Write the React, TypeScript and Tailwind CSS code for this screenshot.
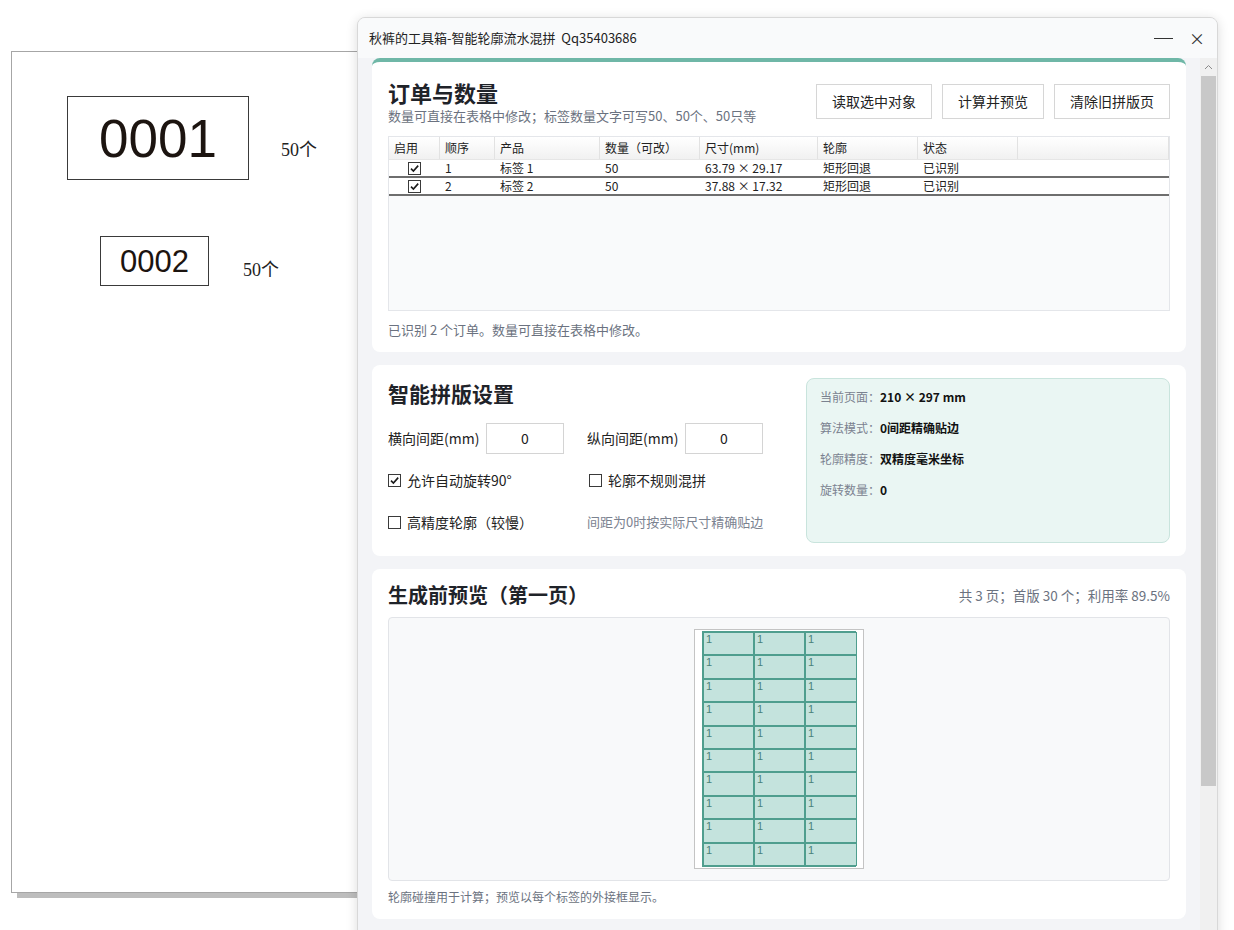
import React from 'react';

const FONT = "font-['Noto_Sans_CJK_SC','Noto_Sans',sans-serif]";

function Check({ checked }: { checked?: boolean }) {
  return (
    <span className="inline-flex items-center justify-center w-[13px] h-[13px] border border-[#3a3a3a] bg-white shrink-0">
      {checked && (
        <svg width="11" height="11" viewBox="0 0 11 11">
          <path d="M2 5.6 L4.4 8 L9.2 2.6" fill="none" stroke="#1a1a1a" strokeWidth="1.6" />
        </svg>
      )}
    </span>
  );
}

const headers = ['启用', '顺序', '产品', '数量（可改）', '尺寸(mm)', '轮廓', '状态', ''];
const rows = [
  ['1', '标签 1', '50', '63.79 × 29.17', '矩形回退', '已识别'],
  ['2', '标签 2', '50', '37.88 × 17.32', '矩形回退', '已识别'],
];
const COLS = 'grid grid-cols-[51px_55px_105px_100px_118px_100px_100px_1fr]';

function Table() {
  return (
    <div className="h-[175px] border border-[#e4e6ea] bg-[#f9fafb] flex flex-col">
      <div className={`${COLS} h-[23px] bg-gradient-to-b from-white to-[#f1f1f1] border-b border-[#e6e6e6]`}>
        {headers.map((h, i) => (
          <div key={i} className="flex items-center px-[5px] text-[12px] text-[#222] border-r border-[#e2e2e2]">
            {h}
          </div>
        ))}
      </div>
      {rows.map((r, i) => (
        <div key={i} className={`${COLS} h-[18px] bg-white border-b-2 border-[#6e6e6e]`}>
          <div className="flex items-center justify-center">
            <Check checked />
          </div>
          {r.map((c, j) => (
            <div key={j} className="flex items-center px-[5px] text-[12px] leading-none text-[#222]">
              {c}
            </div>
          ))}
          <div />
        </div>
      ))}
    </div>
  );
}

function Btn({ children }: { children: React.ReactNode }) {
  return (
    <div className="h-[35px] px-[15px] flex items-center border border-[#d6d6d6] bg-white text-[14px] text-[#222]">
      {children}
    </div>
  );
}

function InfoRow({ label, value }: { label: string; value: string }) {
  return (
    <div className="h-[31px] flex items-center text-[12px]">
      <span className="text-[#7b8290]">{label}</span>
      <span className="font-bold text-[#111]">{value}</span>
    </div>
  );
}

function Preview() {
  const cells = Array.from({ length: 30 });
  return (
    <div className="h-[264px] border border-[#e2e4e8] rounded-[4px] bg-[#f8f9fa] flex justify-center pt-[11px]">
      <div className="w-[170px] h-[240px] bg-white border border-[#c4c4c4] pl-[7px] pt-[1px]">
        <div className="grid grid-cols-[51px_51px_52px] w-[154px] border border-[#4f9e8e]">
          {cells.map((_, i) => (
            <div
              key={i}
              className="h-[23.4px] bg-[#c4e3dd] border border-[#4f9e8e] text-[11px] leading-[12px] text-[#4a827a] pl-[2px] font-['Liberation_Sans',sans-serif]"
            >
              1
            </div>
          ))}
        </div>
      </div>
    </div>
  );
}

export default function App() {
  return (
    <div className={`relative w-[1234px] h-[930px] bg-white overflow-hidden ${FONT}`}>
      {/* document page behind the window */}
      <div className="absolute left-[11px] top-[51px] w-[640px] h-[842px] bg-white border border-[#a6a6a6] shadow-[6px_5px_0_#bdbdbd]">
        <div className="absolute left-[55px] top-[44px] w-[182px] h-[84px] border border-[#3a3a3a] flex items-center justify-center">
          <span className="font-['Liberation_Sans',sans-serif] text-[53px] leading-none text-[#1c1410]">0001</span>
        </div>
        <div className="absolute left-[269px] top-[85px] font-['Liberation_Serif','Noto_Sans_CJK_SC',serif] text-[18px] text-[#222]">50个</div>
        <div className="absolute left-[88px] top-[184px] w-[109px] h-[50px] border border-[#3a3a3a] flex items-center justify-center">
          <span className="font-['Liberation_Sans',sans-serif] text-[31px] leading-none text-[#1c1410]">0002</span>
        </div>
        <div className="absolute left-[231px] top-[205px] font-['Liberation_Serif','Noto_Sans_CJK_SC',serif] text-[18px] text-[#222]">50个</div>
      </div>

      {/* application window */}
      <div className="absolute left-[357px] top-[17px] w-[861px] h-[930px] rounded-t-[8px] border border-[#d8d8d8] bg-[#f3f4f7] shadow-[0_2px_12px_rgba(0,0,0,0.14)] flex flex-col overflow-hidden">
        <div className="h-[40px] shrink-0 bg-[#f9fafb] flex items-center pl-[11px] pr-[12px] text-[13px] text-[#222]">
          <span>秋裤的工具箱-智能轮廓流水混拼&nbsp;&nbsp;Qq35403686</span>
          <span className="ml-auto mr-[16px] w-[19px] h-[1px] bg-[#333]" />
          <span className="text-[16px] leading-none text-[#333]">×</span>
        </div>
        <div className="flex flex-1 min-h-0">
          <div className="flex-1 min-w-0 px-[14px] flex flex-col gap-[13px]">
            {/* card 1 */}
            <div className="bg-white rounded-[8px] border-t-4 border-[#6fb7a7] px-[16px] pt-[16px] pb-[12px]">
              <div className="flex items-start">
                <div>
                  <div className="text-[22px] leading-[28px] font-bold text-[#1f2329]">订单与数量</div>
                  <div className="text-[13px] leading-[20px] text-[#6b7280]">数量可直接在表格中修改；标签数量文字可写50、50个、50只等</div>
                </div>
                <div className="ml-auto mt-[6px] flex gap-[10px]">
                  <Btn>读取选中对象</Btn>
                  <Btn>计算并预览</Btn>
                  <Btn>清除旧拼版页</Btn>
                </div>
              </div>
              <div className="mt-[10px]">
                <Table />
              </div>
              <div className="mt-[9px] text-[13px] leading-[20px] text-[#6b7280]">已识别 2 个订单。数量可直接在表格中修改。</div>
            </div>

            {/* card 2 */}
            <div className="bg-white rounded-[8px] px-[16px] py-[13px] flex">
              <div className="flex-1 pt-[1px]">
                <div className="text-[21px] leading-[28px] font-bold text-[#1f2329]">智能拼版设置</div>
                <div className="mt-[16px] flex items-center text-[14px] text-[#222]">
                  <span className="w-[98px]">横向间距(mm)</span>
                  <div className="w-[78px] h-[31px] border border-[#d4d4d4] flex items-center justify-center">0</div>
                  <span className="ml-[23px] w-[98px]">纵向间距(mm)</span>
                  <div className="w-[78px] h-[31px] border border-[#d4d4d4] flex items-center justify-center">0</div>
                </div>
                <div className="mt-[11px] grid grid-cols-[199px_1fr] text-[14px] text-[#222]">
                  <div className="h-[30px] flex items-center gap-[6px]"><Check checked />允许自动旋转90°</div>
                  <div className="h-[30px] flex items-center gap-[6px] pl-[2px]"><Check />轮廓不规则混拼</div>
                  <div className="mt-[12px] h-[30px] flex items-center gap-[6px]"><Check />高精度轮廓（较慢）</div>
                  <div className="mt-[12px] h-[30px] flex items-center text-[13px] text-[#7b8290]">间距为0时按实际尺寸精确贴边</div>
                </div>
              </div>
              <div className="w-[364px] h-[165px] rounded-[8px] border border-[#c9e4dd] bg-[#eaf6f3] px-[13px] pt-[2px]">
                <InfoRow label="当前页面：" value="210 × 297 mm" />
                <InfoRow label="算法模式：" value="0间距精确贴边" />
                <InfoRow label="轮廓精度：" value="双精度毫米坐标" />
                <InfoRow label="旋转数量：" value="0" />
              </div>
            </div>

            {/* card 3 */}
            <div className="bg-white rounded-[8px] px-[16px] pt-[12px] pb-[12px]">
              <div className="flex items-center h-[28px]">
                <div className="text-[20px] font-bold text-[#1f2329]">生成前预览（第一页）</div>
                <div className="ml-auto text-[13.5px] text-[#6b7280]">共 3 页；首版 30 个；利用率 89.5%</div>
              </div>
              <div className="mt-[8px]">
                <Preview />
              </div>
              <div className="mt-[6px] text-[12px] leading-[20px] text-[#6b7280]">轮廓碰撞用于计算；预览以每个标签的外接框显示。</div>
            </div>
          </div>
          {/* scrollbar */}
          <div className="w-[17px] shrink-0 bg-[#f0f0f0] flex flex-col">
            <div className="h-[18px] flex items-center justify-center">
              <svg width="9" height="6" viewBox="0 0 9 6">
                <path d="M1 5 L4.5 1.5 L8 5" fill="none" stroke="#8a8a8a" strokeWidth="1" />
              </svg>
            </div>
            <div className="mx-[1px] h-[710px] bg-[#c8c8c8]" />
          </div>
        </div>
      </div>
    </div>
  );
}
